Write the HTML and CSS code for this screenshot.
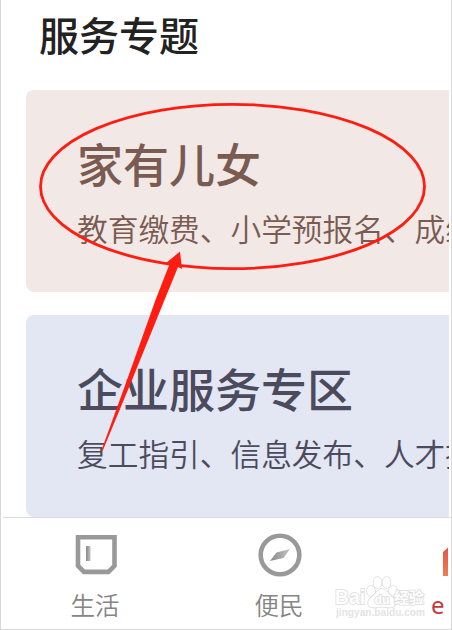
FILE: index.html
```html
<!DOCTYPE html>
<html lang="zh-CN">
<head>
<meta charset="utf-8">
<title>服务专题</title>
<link rel="stylesheet" href="styles.css">
</head>
<body>
<div class="screen">
  <main class="content">
    <h1 class="heading">服务专题</h1>
    <section class="card family">
      <h2 class="card-title">家有儿女</h2>
      <p class="card-text">教育缴费、小学预报名、成绩</p>
    </section>
    <section class="card business">
      <h2 class="card-title">企业服务专区</h2>
      <p class="card-text">复工指引、信息发布、人才招</p>
    </section>
  </main>
  <nav class="tabs">
    <div class="tab">
      <svg class="icon" width="44" height="44" viewBox="0 0 44 44">
        <defs><linearGradient id="bar" x1="0" x2="1"><stop offset="0" stop-color="#888"/><stop offset="1" stop-color="#c4c4c4"/></linearGradient></defs>
        <path d="M5 4.300H41.500V32.800L35.500 38.900H11L5 32.800Z" fill="none" stroke="#999" stroke-width="4.600"/>
        <rect x="13" y="13" width="4.500" height="15" fill="url(#bar)"/>
      </svg>
      <span class="label">生活</span>
    </div>
    <div class="tab">
      <svg class="icon" width="44" height="44" viewBox="0 0 44 44">
        <defs><linearGradient id="needle" x1="0" x2="1"><stop offset="0" stop-color="#888"/><stop offset="1" stop-color="#c4c4c4"/></linearGradient></defs>
        <circle cx="23" cy="22" r="19.300" fill="none" stroke="#999" stroke-width="4.600"/>
        <path d="M13 28L19.500 19.500L33 16L26.500 25Z" fill="url(#needle)"/>
      </svg>
      <span class="label">便民</span>
    </div>
    <div class="tab current">
      <svg class="home" width="5" height="30" viewBox="0 0 5 30">
        <defs><linearGradient id="roof" x1="0" y1="0" x2="0" y2="1"><stop offset="0" stop-color="#e65345"/><stop offset="1" stop-color="#ef7d55"/></linearGradient></defs>
        <path d="M0 6L5 1.500V30H0Z" fill="url(#roof)"/>
      </svg>
      <span class="brand">e</span>
    </div>
  </nav>
  <svg class="watermark" width="96" height="48" viewBox="0 0 96 48">
    <g fill="#fff" stroke="#dcdcdc" stroke-width="1.600" paint-order="stroke">
      <text class="wm-name" x="3" y="29" textLength="30" lengthAdjust="spacingAndGlyphs">Bai</text>
      <ellipse cx="39" cy="16" rx="4" ry="5"/>
      <ellipse cx="45.500" cy="7.500" rx="4" ry="5.500"/>
      <ellipse cx="54.500" cy="7.500" rx="4" ry="5.500"/>
      <ellipse cx="61" cy="16" rx="4" ry="5"/>
      <path d="M50 14C45 14 44 19 40 22C34 26 35 33 43 32.500C48 31.500 52 31.500 57 32.500C65 33 66 26 60 22C56 19 55 14 50 14Z"/>
      <text class="wm-du" x="42.500" y="28.500" textLength="15" lengthAdjust="spacingAndGlyphs">du</text>
      <text class="wm-cjk" x="62" y="28" textLength="30" lengthAdjust="spacingAndGlyphs">经验</text>
    </g>
    <text class="wm-url" x="4" y="41" textLength="89" lengthAdjust="spacingAndGlyphs">jingyan.baidu.com</text>
  </svg>
  <svg class="marks" width="452" height="630" viewBox="0 0 452 630">
    <ellipse cx="232.500" cy="186.500" rx="192" ry="82.200" fill="none" stroke="#ff1d12" stroke-width="2.800"/>
    <path d="M101 451.500L127 380L155.500 300L169 265.500L165.500 263.500L180 251.500L182 269L178 267L164.500 300L132 380L103 450Z" fill="#ff1d12"/>
  </svg>
</div>
</body>
</html>
```

FILE: styles.css
```css
* {
  box-sizing: border-box;
}

body {
  margin: 0;
  background: #fff;
  font-family: "Noto Sans CJK SC", sans-serif;
}

.screen {
  position: relative;
  width: 452px;
  height: 630px;
  overflow: hidden;
  border: solid #d8d8d8;
  border-width: 0 1px 1px;
}

.content {
  display: flex;
  flex-direction: column;
  height: 517px;
  padding: 0 2px 0 24.5px;
  overflow: hidden;
}

.heading {
  flex: none;
  height: 90px;
  margin: 0;
  padding: 4px 0 0 13.5px;
  color: #222;
  font-size: 40px;
  font-weight: 500;
  line-height: 60px;
}

.card {
  flex: none;
  height: 202px;
  padding: 38px 0 0 51.5px;
  overflow: hidden;
  border-radius: 8px 0 0 8px;
  white-space: nowrap;
}

.card + .card {
  margin-top: 23px;
}

.family {
  background: #f2e8e6;
  color: #795b52;
}

.business {
  background: #e3e6f3;
  color: #4b4b5d;
}

.card-title {
  margin: 0;
  font-size: 46px;
  font-weight: 500;
  line-height: 68px;
}

.card-text {
  margin: 10px 0 0;
  font-size: 30.7px;
  font-weight: 350;
  line-height: 44px;
}

.tabs {
  display: flex;
  height: 112px;
  margin-left: 2px;
  border-top: 1px solid #dcdcdc;
}

.tab {
  display: flex;
  flex: none;
  flex-direction: column;
  align-items: center;
  width: 184px;
  padding-top: 15px;
}

.icon {
  flex: none;
  overflow: visible;
}

.label {
  margin-top: 12px;
  color: #858585;
  font-size: 24.5px;
  font-weight: 350;
  line-height: 32px;
}

.current {
  align-items: flex-start;
  width: 78px;
  padding: 28px 0 0 60px;
}

.home {
  margin-left: 12px;
}

.brand {
  margin-top: 13px;
  color: #c53a40;
  font-family: "Noto Sans", sans-serif;
  font-size: 24px;
  line-height: 32px;
}

.watermark {
  position: absolute;
  left: 331px;
  top: 575px;
}

.wm-name,
.wm-du,
.wm-url {
  font-family: "Liberation Sans", sans-serif;
  font-weight: 700;
}

.wm-name {
  font-size: 20px;
}

.wm-du {
  font-size: 13px;
}

.wm-cjk {
  font-size: 15px;
  font-weight: 700;
}

.wm-url {
  fill: #e4e4e4;
  font-size: 10px;
}

.marks {
  position: absolute;
  left: -1px;
  top: 0;
}
```
